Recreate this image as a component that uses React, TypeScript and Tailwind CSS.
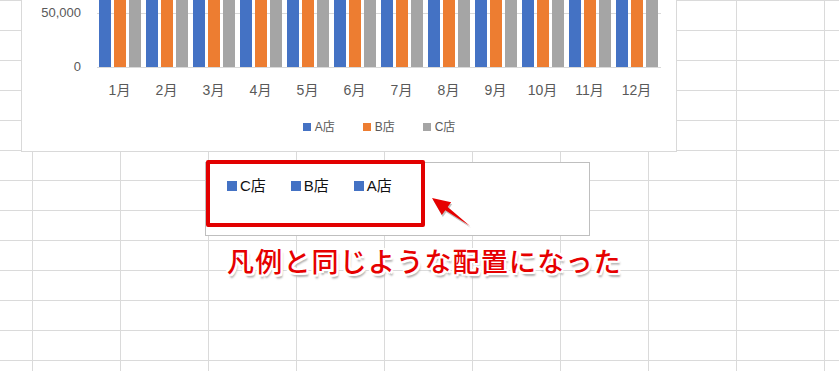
const months = ["1月", "2月", "3月", "4月", "5月", "6月", "7月", "8月", "9月", "10月", "11月", "12月"];

const seriesColors = ["bg-[#4472c4]", "bg-[#ed7d31]", "bg-[#a5a5a5]"];

const SheetGrid = () => (
  <div className="grid grid-cols-[32px_repeat(10,88px)] auto-rows-[30px] w-[912px]">
    {Array.from({ length: 13 * 11 }).map((_, i) => (
      <div
        key={i}
        className={`border-t border-[#dadada] ${i % 11 === 0 ? "" : "border-l"}`}
      />
    ))}
  </div>
);

const Chart = () => (
  <div className="absolute left-[21px] top-0 w-[656px] h-[152px] bg-white border border-t-0 border-[#d9d9d9] font-['Liberation_Sans','Noto_Sans_CJK_JP',sans-serif] text-[#595959]">
    <div className="flex items-start h-[68px]">
      <div className="w-[59px] flex flex-col items-end pt-[5px] text-[13px] leading-4">
        <span>50,000</span>
        <span className="mt-[38px]">0</span>
      </div>
      <div className="relative ml-[16px] w-[564px] h-[68px] border-b border-[#d9d9d9]">
        <div className="absolute left-0 right-0 top-[13px] h-px bg-[#d9d9d9]" />
        <div className="relative flex h-full">
          {months.map((m) => (
            <div key={m} className="w-[47px] flex gap-[3px] pl-[2px]">
              {seriesColors.map((c) => (
                <div key={c} className={`w-[12px] h-full ${c}`} />
              ))}
            </div>
          ))}
        </div>
      </div>
    </div>
    <div className="flex ml-[75px] mt-[14px] text-[14px] leading-4">
      {months.map((m) => (
        <div key={m} className="w-[47px] text-center pr-[2px]">{m}</div>
      ))}
    </div>
    <div className="flex justify-center ml-[75px] w-[564px] mt-[21px] gap-[28px] text-[12px] leading-4">
      {["A店", "B店", "C店"].map((t, i) => (
        <div key={t} className="flex items-center gap-[4px]">
          <span className={`w-[8px] h-[8px] ${seriesColors[i]}`} />
          <span>{t}</span>
        </div>
      ))}
    </div>
  </div>
);

const LegendBox = () => (
  <div className="absolute left-[205px] top-[162px] w-[385px] h-[74px] bg-white border border-[#bfbfbf]">
    <div className="flex gap-[25px] pl-[21px] pt-[14px] text-[15px] leading-[18px] text-[#111] font-['Liberation_Sans','Noto_Sans_CJK_JP',sans-serif]">
      {["C店", "B店", "A店"].map((t) => (
        <div key={t} className="flex items-center gap-[3px]">
          <span className="w-[10px] h-[10px] bg-[#4472c4]" />
          <span>{t}</span>
        </div>
      ))}
    </div>
  </div>
);

const Arrow = () => (
  <svg className="absolute left-0 top-0" width="839" height="371" viewBox="0 0 839 371">
    <polygon
      points="433,200 452.2,204.3 448.7,209.1 471,228 446.3,212.3 442.8,217.1"
      fill="#9a9a9a"
      opacity="0.6"
    />
    <polygon
      points="432,198 451.2,202.3 447.7,207.1 470,226 445.3,210.3 441.8,215.1"
      fill="#e60000"
    />
  </svg>
);

export default function App() {
  return (
    <div className="relative w-[839px] h-[371px] overflow-hidden bg-white">
      <SheetGrid />
      <Chart />
      <LegendBox />
      <div className="absolute left-[206px] top-[160px] w-[219px] h-[67px] border-4 border-[#e20000] rounded-[2px]" />
      <Arrow />
      <div className="absolute left-[227px] top-[247px] text-[27px] leading-none tracking-[1.2px] font-medium text-[#e60000] font-['Noto_Sans_CJK_JP',sans-serif] [text-shadow:2px_0_0_#fff,-2px_0_0_#fff,0_2px_0_#fff,0_-2px_0_#fff,2px_2px_0_#fff,-2px_-2px_0_#fff,2px_-2px_0_#fff,-2px_2px_0_#fff,2px_4px_2px_#b0b0b0]">
        凡例と同じような配置になった
      </div>
    </div>
  );
}
